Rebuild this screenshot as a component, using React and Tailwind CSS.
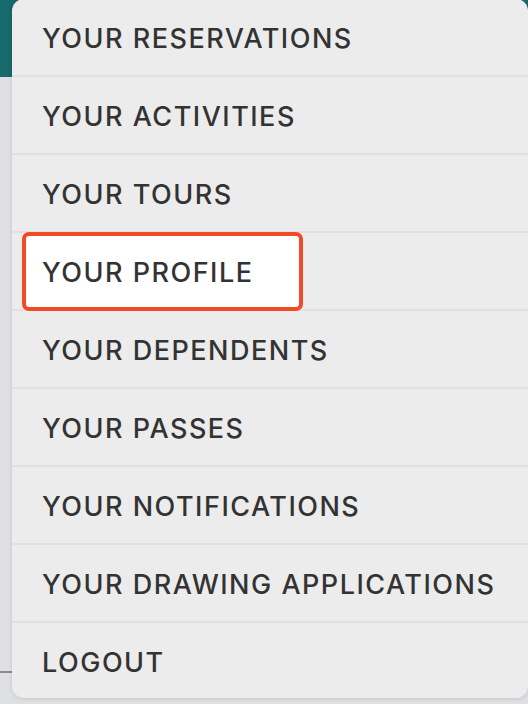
import React from 'react';

const items = [
  'YOUR RESERVATIONS',
  'YOUR ACTIVITIES',
  'YOUR TOURS',
  'YOUR PROFILE',
  'YOUR DEPENDENTS',
  'YOUR PASSES',
  'YOUR NOTIFICATIONS',
  'YOUR DRAWING APPLICATIONS',
  'LOGOUT',
];

const MenuRow = ({ label, highlighted, last }) => (
  <div
    className={`relative flex items-center pl-[30px] pt-[3px] ${last ? 'h-[75px]' : 'h-[78px] border-b-2 border-[#e1e1e1]'}`}
  >
    {highlighted && (
      <div className="absolute left-[10px] top-[-1px] w-[281px] h-[79px] bg-white border-[4px] border-[#f24a26] rounded-[7px]" />
    )}
    <span className="relative text-[27px] font-medium tracking-[1.5px] text-[#333333] leading-none">
      {label}
    </span>
  </div>
);

export default function App() {
  return (
    <div
      className="relative w-[528px] h-[704px] overflow-hidden bg-[#dfe0e3]"
      style={{ fontFamily: 'Inter, "Noto Sans", sans-serif' }}
    >
      {/* page behind the menu */}
      <div className="h-[77px] bg-[#17696c]" />
      <div className="flex">
        <div className="w-[12px] mt-[594px] border-t-2 border-[#8a8a8a]" />
      </div>

      {/* dropdown */}
      <div className="absolute left-[12px] top-[-1px] w-[516px] bg-[#ececec] rounded-[12px] shadow-[0_1px_4px_rgba(0,0,0,0.12)] flex flex-col">
        {items.map((label, i) => (
          <MenuRow
            key={label}
            label={label}
            highlighted={label === 'YOUR PROFILE'}
            last={i === items.length - 1}
          />
        ))}
      </div>
    </div>
  );
}
